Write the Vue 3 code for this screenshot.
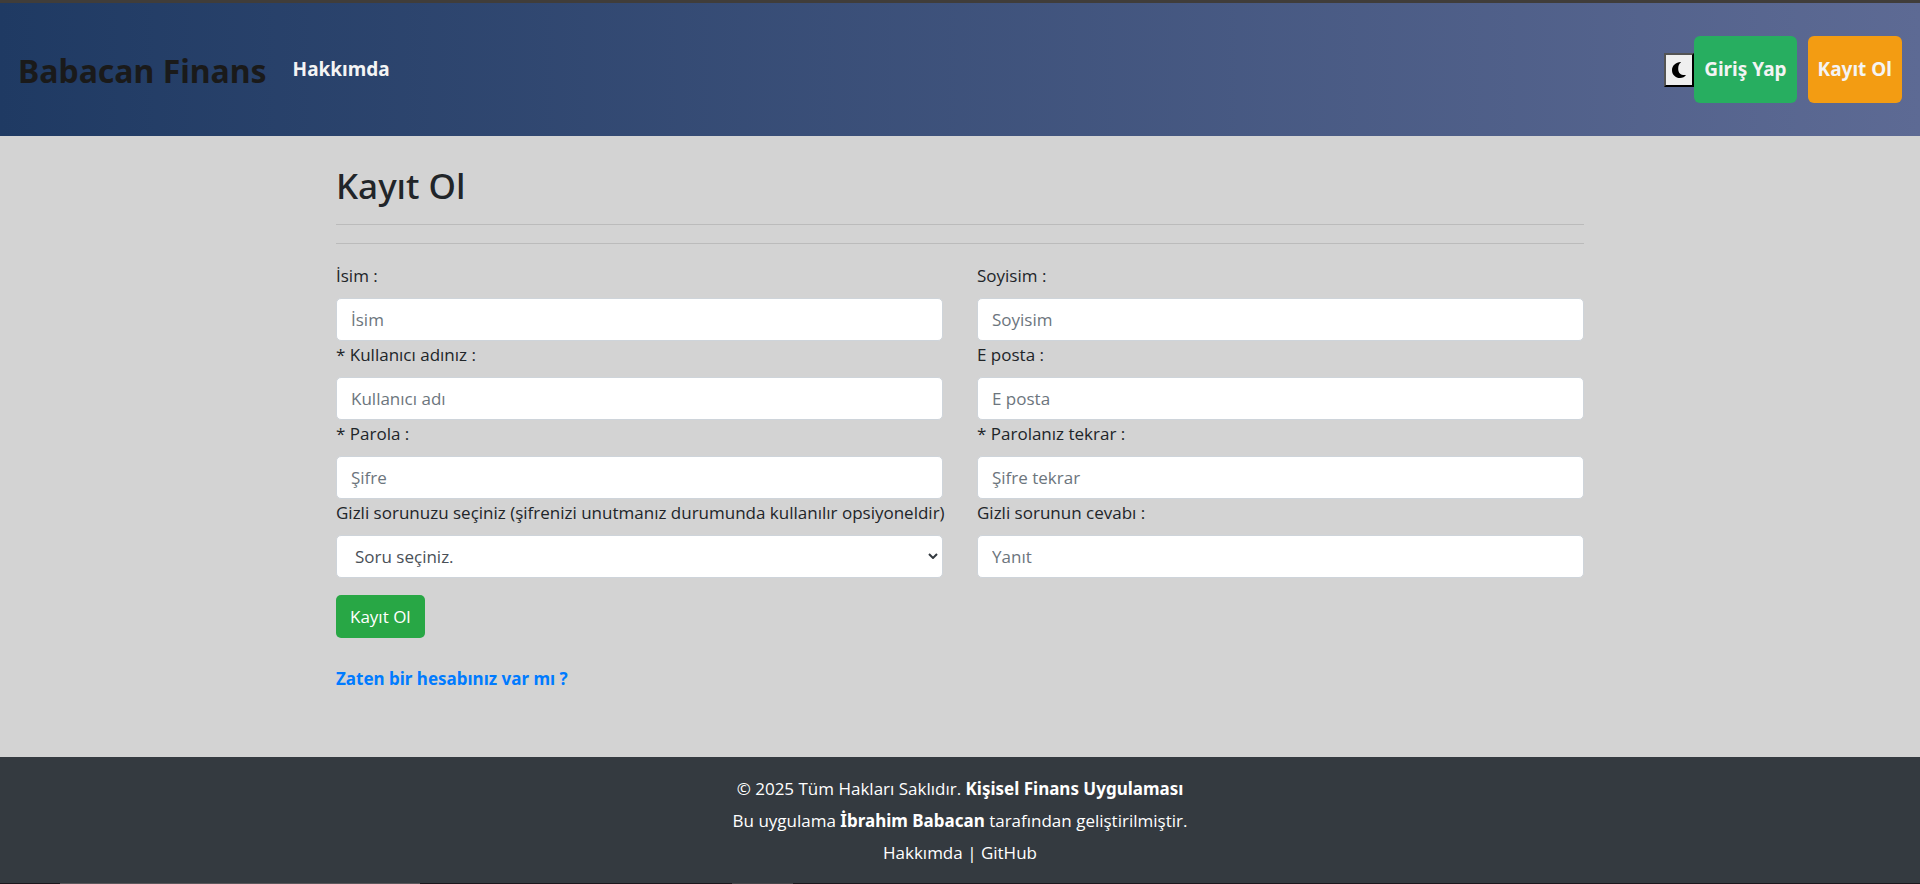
<script setup>
const fields = [
  { id: 'first-name', label: 'İsim :', placeholder: 'İsim', type: 'text' },
  { id: 'last-name', label: 'Soyisim :', placeholder: 'Soyisim', type: 'text' },
  { id: 'username', label: '* Kullanıcı adınız :', placeholder: 'Kullanıcı adı', type: 'text' },
  { id: 'email', label: 'E posta :', placeholder: 'E posta', type: 'email' },
  { id: 'password', label: '* Parola :', placeholder: 'Şifre', type: 'password' },
  { id: 'password-repeat', label: '* Parolanız tekrar :', placeholder: 'Şifre tekrar', type: 'password' },
  { id: 'question', label: 'Gizli sorunuzu seçiniz (şifrenizi unutmanız durumunda kullanılır opsiyoneldir)', type: 'select' },
  { id: 'answer', label: 'Gizli sorunun cevabı :', placeholder: 'Yanıt', type: 'text' },
]
</script>

<template>
  <div class="page">
    <header class="navbar">
      <a class="brand" href="#">Babacan Finans</a>
      <nav class="nav">
        <a class="nav-link" href="#">Hakkımda</a>
      </nav>
      <div class="actions">
        <button class="theme" type="button" aria-label="Tema">
          <svg viewBox="0 0 16 18" width="16" height="18" aria-hidden="true">
            <path d="M9.600 1C5 1.200 1 4.500 1 9.200C1 13.800 4.700 17 9 17C11.600 17 13.800 16 15 14C10.300 14.700 7.200 12.200 7.200 7.900C7.200 5 8 2.600 9.900 1.500Z" fill="#000" />
          </svg>
        </button>
        <a class="pill login" href="#">Giriş Yap</a>
        <a class="pill signup" href="#">Kayıt Ol</a>
      </div>
    </header>

    <main class="content">
      <h1>Kayıt Ol</h1>
      <hr>
      <hr>
      <form class="form" @submit.prevent>
        <div class="grid">
          <div v-for="f in fields" :key="f.id" class="field">
            <label :for="f.id">{{ f.label }}</label>
            <div v-if="f.type === 'select'" class="select-wrap">
              <select :id="f.id" class="control">
                <option>Soru seçiniz.</option>
              </select>
              <svg class="chevron" viewBox="0 0 10 6" width="10" height="6" aria-hidden="true">
                <path d="M1 1L5 5L9 1" fill="none" stroke="#343a40" stroke-width="2" />
              </svg>
            </div>
            <input v-else :id="f.id" class="control" :type="f.type" :placeholder="f.placeholder">
          </div>
        </div>
        <button class="submit" type="submit">Kayıt Ol</button>
      </form>
      <a class="have-account" href="#">Zaten bir hesabınız var mı ?</a>
    </main>

    <footer class="footer">
      <p>© 2025 Tüm Hakları Saklıdır. <strong>Kişisel Finans Uygulaması</strong></p>
      <p>Bu uygulama <strong>İbrahim Babacan</strong> tarafından geliştirilmiştir.</p>
      <p><a href="#">Hakkımda</a> | <a href="#">GitHub</a></p>
    </footer>
    <div class="edge"></div>
  </div>
</template>

<style>
body {
  margin: 0;
  background: #d3d3d3;
}
</style>

<style scoped>
.page,
.page * {
  box-sizing: border-box;
}
.page {
  display: flex;
  flex-direction: column;
  min-height: 100vh;
  border-top: 3px solid #403d3a;
  background: #d3d3d3;
  color: #212529;
  font-family: "Open Sans", "Noto Sans", sans-serif;
  font-size: 17px;
  line-height: 27px;
}
a {
  text-decoration: none;
}
.navbar,
h1,
.have-account,
strong {
  font-family: "Noto Sans", "Open Sans", sans-serif;
}
.navbar {
  display: flex;
  align-items: center;
  padding: 33px 18px;
  background: linear-gradient(to right, #1f3a63, #5d6a94);
  font-weight: 700;
}
.brand {
  margin-right: 26px;
  padding-top: 2px;
  color: #1a1a1a;
  font-size: 32px;
  line-height: 48px;
}
.nav-link {
  color: #f4f4f4;
  font-size: 19px;
}
.actions {
  display: flex;
  align-items: center;
  margin-left: auto;
}
.theme {
  display: flex;
  align-items: center;
  justify-content: center;
  width: 30px;
  height: 34px;
  padding: 0;
  border: 2px outset #000;
  background: #efefef;
}
.pill {
  padding: 20px 10px;
  border-radius: 6px;
  color: #f4f4f4;
  font-size: 19px;
}
.login {
  background: #27ae60;
}
.signup {
  margin-left: 11px;
  background: #f39c12;
}
.content {
  flex: 1;
  width: 100%;
  max-width: 1284px;
  margin: 0 auto;
  padding: 28px 18px 0;
}
h1 {
  margin: 0 0 17px;
  font-size: 35px;
  font-weight: 500;
  line-height: 43px;
}
hr {
  margin: 0 0 18px;
  border: 0;
  border-top: 1px solid #bbb;
}
.grid {
  display: grid;
  grid-template-columns: repeat(2, minmax(0, 1fr));
  column-gap: 34px;
}
label {
  display: block;
  margin-bottom: 9px;
  white-space: nowrap;
}
.control {
  display: block;
  width: 100%;
  height: 43px;
  padding: 6px 14px;
  border: 1px solid #ced4da;
  border-radius: 5px;
  outline: 0;
  background: #fff;
  color: #495057;
  font: inherit;
}
.control::placeholder {
  color: #6c757d;
  opacity: 1;
}
select.control {
  padding-left: 18px;
  appearance: none;
}
.select-wrap {
  position: relative;
}
.chevron {
  position: absolute;
  top: 18px;
  right: 5px;
  pointer-events: none;
}
.submit {
  display: block;
  height: 43px;
  margin: 17px 0 27px;
  padding: 0 14px;
  border: 0;
  border-radius: 5px;
  background: #28a745;
  color: #fff;
  font: inherit;
}
.have-account {
  color: #007bff;
  font-weight: 700;
}
.footer {
  padding: 18px 18px 17px;
  background: #343a40;
  color: #fff;
  text-align: center;
}
.footer p {
  margin: 0 0 5px;
}
.footer p:last-child {
  margin: 0;
}
.footer a {
  color: #fff;
}
.edge {
  height: 1px;
  background: linear-gradient(
    to right,
    #1c171c 60px,
    #5c585c 60px 420px,
    #1c171c 420px 732px,
    #48464a 732px 793px,
    #1c171c 793px
  );
}
</style>
